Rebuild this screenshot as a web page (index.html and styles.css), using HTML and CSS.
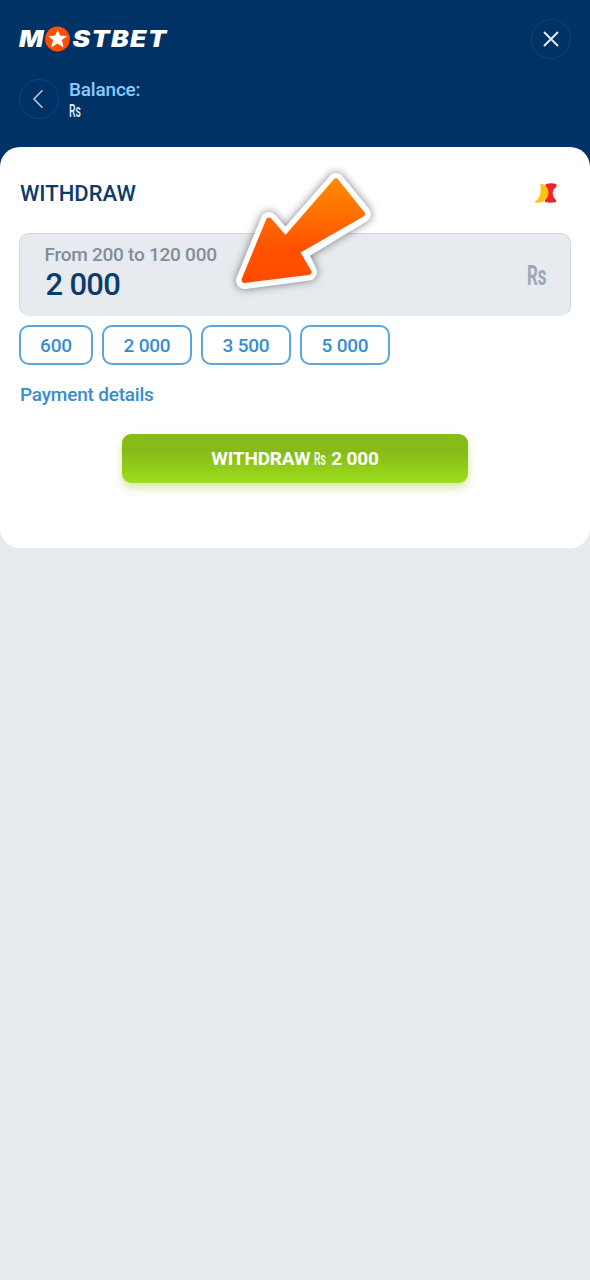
FILE: index.html
```html
<!DOCTYPE html>
<html lang="en">
<head>
<meta charset="utf-8">
<title>Mostbet – Withdraw</title>
<link rel="stylesheet" href="styles.css">
</head>
<body>
<header class="header">
  <div class="top-row">
    <svg class="logo" width="150" height="26" viewBox="0 0 150 26" role="img" aria-label="Mostbet">
      <g class="logo-text">
        <text x="0" y="21" textLength="24.500" lengthAdjust="spacingAndGlyphs">M</text>
        <text class="logo-tail" x="53.5" y="21" textLength="95" lengthAdjust="spacingAndGlyphs">STBET</text>
      </g>
      <circle cx="38.5" cy="13" r="12.4" fill="#ff5000"/>
      <path fill="#fff" d="M38.8 3.6l2.4 6.1 7 .2-5.3 4.2 1.7 7.4-6.2-4.1-6.3 4.1 2-7.4-5-4.2 6.9-.2z"/>
    </svg>
    <button class="round" aria-label="Close">
      <svg width="18" height="18" viewBox="0 0 18 18"><path d="M2 2l14 14M16 2L2 16" fill="none" stroke="#dde9f5" stroke-width="2"/></svg>
    </button>
  </div>
  <div class="balance-row">
    <button class="round" aria-label="Back">
      <svg width="18" height="20" viewBox="0 0 18 20"><path d="M12.500 1.200L4 10l8.500 8.800" fill="none" stroke="#b9c9dc" stroke-width="1.6"/></svg>
    </button>
    <div class="balance">
      <span class="balance-label">Balance:</span>
      <svg class="balance-rs" width="13" height="18"><text x="0" y="15" textLength="12" lengthAdjust="spacingAndGlyphs">Rs</text></svg>
    </div>
  </div>
</header>
<main class="card">
  <div class="title-row">
    <h1 class="title">WITHDRAW</h1>
    <svg class="method" width="24" height="20" viewBox="0 0 24 20">
      <path fill="#ed2430" d="M11.500 1.200Q17.500-.5 22.500 1.200V3.500Q15 9.500 22.200 17.500V19Q17 20.500 11 19z"/>
      <path fill="#fcc20f" d="M6.300.8C10.500 1 14.500 4.500 14.500 9.500S10.500 19.600 5 19.600Q1.500 19.800 .3 18.800C5 16.500 7.800 12 6.300.8z"/>
    </svg>
  </div>
  <div class="amount">
    <div class="amount-text">
      <span class="range">From 200 to 120 000</span>
      <span class="value">2 000</span>
    </div>
    <svg class="amount-rs" width="20" height="28"><text x="0" y="24" textLength="19.500" lengthAdjust="spacingAndGlyphs">Rs</text></svg>
    <svg class="arrow" width="170" height="150" viewBox="0 0 170 150">
      <defs>
        <linearGradient id="heat" x1="0" y1="0" x2="0" y2="1">
          <stop offset="0" stop-color="#ff8a00"/><stop offset=".7" stop-color="#ff5000"/><stop offset="1" stop-color="#ff4d00"/>
        </linearGradient>
      </defs>
      <path class="arrow-edge" d="M116 21.500L142.500 54 79 92.500 88.500 112 24.500 120.500 49 60.500 65.500 79.500z"/>
      <path class="arrow-fill" d="M116 21.500L142 54 76.500 91.500 88.500 112 24.500 120 49 60.500 65.500 79.500z"/>
    </svg>
  </div>
  <div class="presets">
    <button class="preset preset-short">600</button>
    <button class="preset">2 000</button>
    <button class="preset">3 500</button>
    <button class="preset">5 000</button>
  </div>
  <a class="details">Payment details</a>
  <button class="submit">
    <span>WITHDRAW</span>
    <svg class="submit-rs" width="13" height="18"><text y="15" transform="scale(.58 1)">Rs</text></svg>
    <span>2 000</span>
  </button>
</main>
</body>
</html>
```
FILE: styles.css
```css
* { box-sizing: border-box; }
body {
  margin: 0;
  min-height: 1280px;
  background: linear-gradient(#003265 180px, #e7ebef 180px);
  font-family: Roboto, sans-serif;
  font-weight: 500;
}
button { font: inherit; padding: 0; }
svg { display: block; overflow: visible; }
.header { height: 147px; padding: 19px 19px 0; }
.top-row { display: flex; justify-content: space-between; align-items: center; height: 40px; }
.logo-text { font: italic 900 22.5px Inter, sans-serif; fill: #fff; }
.logo-tail { letter-spacing: 1.2px; }
.round {
  display: flex; align-items: center; justify-content: center;
  width: 40px; height: 40px;
  border: 1.5px solid #064686; border-radius: 50%;
  background: none;
}
.balance-row { display: flex; gap: 10px; margin-top: 20px; }
.balance { display: flex; flex-direction: column; }
.balance-label { font-size: 19px; line-height: 22px; letter-spacing: -.2px; color: #8acbff; }
.balance-rs { font-size: 19px; fill: #e3edf8; margin-top: 1px; }
.card { height: 401px; padding: 31px 19px 0; border-radius: 20px; background: #fff; }
.title-row { display: flex; justify-content: space-between; align-items: center; height: 30px; padding: 0 13px 0 1px; }
.title { margin: 1px 0 0; font-size: 22px; font-weight: 500; color: #0b3c6b; }
.method { margin-top: -1px; }
.amount {
  position: relative;
  display: flex; justify-content: space-between; align-items: center;
  height: 83px; margin-top: 25px; padding: 0 23px 0 24.5px;
  border: 1.5px solid #cfd7e1; border-bottom-color: #e3e8ee; border-radius: 10px;
  background: #e7ebf0;
}
.amount-text { display: flex; flex-direction: column; margin-top: -4px; }
.range { font-size: 19px; line-height: 24px; letter-spacing: -.25px; color: #808e99; }
.value { font-size: 31px; line-height: 36px; letter-spacing: -.7px; color: #0b3c6b; padding-left: 1px; }
.amount-rs { font-size: 28px; font-weight: 700; fill: #9ba8b3; }
.arrow { position: absolute; left: 200px; top: -74px; }
.arrow-edge {
  fill: #fff; stroke: #fff; stroke-width: 17; stroke-linejoin: round;
  filter: drop-shadow(0 0 4px rgba(0, 0, 0, .5));
}
.arrow-fill { fill: url(#heat); stroke: url(#heat); stroke-width: 6; stroke-linejoin: round; }
.presets { display: flex; gap: 9px; margin-top: 9px; }
.preset {
  width: 90px; height: 40px;
  border: 2px solid #5aa5dd; border-radius: 10px;
  background: #fff; color: #388dd0; font-size: 19px; letter-spacing: -.2px;
}
.preset-short { width: 74px; }
.details { display: block; margin: 18px 0 0 1px; font-size: 19px; line-height: 24px; letter-spacing: -.2px; color: #388dd0; }
.submit {
  display: flex; align-items: center; justify-content: center; gap: 4px;
  width: 346px; height: 49px; margin: 27px auto 0;
  border: 0; border-radius: 9px;
  background: linear-gradient(#86bb18 35%, #9ddd1d);
  box-shadow: 0 5px 10px rgba(140, 200, 30, .38);
  color: #fff; font-size: 19px; font-weight: 700; letter-spacing: -.2px;
}
.submit-rs { fill: #fff; font-weight: 500; font-size: 18px; letter-spacing: 0; }
```
